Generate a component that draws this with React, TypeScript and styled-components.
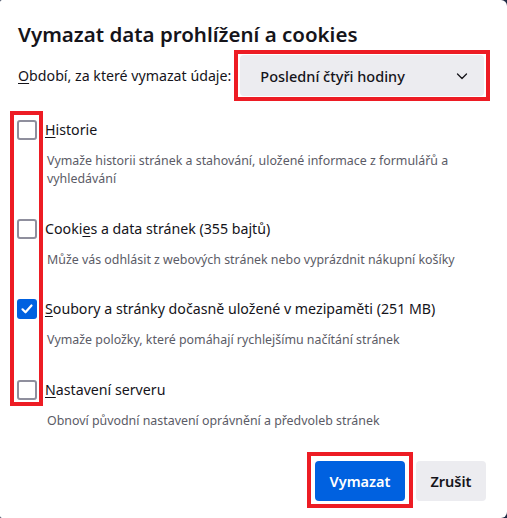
import React from "react";
import styled, { createGlobalStyle } from "styled-components";

const Global = createGlobalStyle`
  html, body { margin: 0; padding: 0; background: #1f2a44; }
  body { font-family: "Noto Sans", "Open Sans", sans-serif; color: #15141a; }
  * { box-sizing: border-box; }
`;

const Dialog = styled.div`
  width: 507px;
  height: 518px;
  background: #ffffff;
  border-radius: 2px 6px 6px 2px;
  padding: 20px 21px 0 17px;
  display: flex;
  flex-direction: column;
`;

const Title = styled.h1`
  margin: 0 0 0 1px;
  font-size: 20.5px;
  line-height: 28px;
  font-weight: 600;
  color: #15141a;
`;

const RangeRow = styled.div`
  margin-top: 7px;
  display: flex;
  align-items: center;
  gap: 9px;
  padding-left: 1px;
`;

const RangeLabel = styled.label`
  font-size: 14.2px;
  color: #15141a;
  white-space: nowrap;
`;

const Marked = styled.div`
  position: relative;
  &::after {
    content: "";
    position: absolute;
    border: 4px solid #ed1c24;
    pointer-events: none;
  }
`;

const Select = styled(Marked)`
  flex: 1;
  height: 41px;
  margin-right: 2px;
  background: #ececf0;
  border-radius: 4px;
  display: flex;
  align-items: center;
  justify-content: space-between;
  padding: 0 16px 0 20px;
  font-size: 14.5px;
  font-weight: 500;
  color: #15141a;
  &::after {
    left: -6px;
    right: -6px;
    top: -5px;
    bottom: -5px;
  }
`;

const List = styled.div`
  position: relative;
  margin-top: 24px;
  display: flex;
  flex-direction: column;
  gap: 30.7px;
`;

const Annotation = styled.div`
  position: absolute;
  left: -7px;
  top: -9px;
  width: 33px;
  height: 295px;
  border: 4px solid #ed1c24;
  pointer-events: none;
`;

const Item = styled.div`
  display: grid;
  grid-template-columns: 20px 1fr;
  column-gap: 8px;
  row-gap: 12px;
`;

const Box = styled.span<{ $checked?: boolean }>`
  width: 20px;
  height: 20px;
  border-radius: 3px;
  border: ${(p) => (p.$checked ? "none" : "2px solid #8f8f9d")};
  background: ${(p) => (p.$checked ? "#0061e0" : "#fff")};
  display: flex;
  align-items: center;
  justify-content: center;
`;

const ItemLabel = styled.span`
  font-size: 14.2px;
  line-height: 20px;
  color: #15141a;
`;

const Desc = styled.p`
  grid-column: 2;
  margin: 0 0 0 2px;
  font-size: 12.4px;
  line-height: 18px;
  color: #5b5b66;
`;

const Buttons = styled.div`
  margin-top: 31px;
  display: flex;
  justify-content: flex-end;
  gap: 11px;
`;

const ButtonWrap = styled(Marked)`
  display: flex;
  &::after {
    left: -8px;
    right: -8px;
    top: -9px;
    bottom: -7px;
  }
`;

const Button = styled.button<{ $primary?: boolean }>`
  height: 40px;
  border: none;
  border-radius: 4px;
  padding: 0;
  width: ${(p) => (p.$primary ? "90px" : "70px")};
  font-family: inherit;
  font-size: 14.5px;
  font-weight: 600;
  background: ${(p) => (p.$primary ? "#0061e0" : "#ececf0")};
  color: ${(p) => (p.$primary ? "#fff" : "#15141a")};
`;

const U = styled.u`
  text-underline-offset: 2px;
`;

const Chevron = () => (
  <svg width="12" height="12" viewBox="0 0 12 12" fill="none">
    <path d="M1.5 4l4.5 4.5L10.5 4" stroke="#15141a" strokeWidth="1.3" strokeLinecap="round" strokeLinejoin="round" />
  </svg>
);

const Check = () => (
  <svg width="14" height="14" viewBox="0 0 14 14" fill="none">
    <path d="M2.5 7.3l3 3L11.5 3.5" stroke="#fff" strokeWidth="2.2" strokeLinecap="round" strokeLinejoin="round" />
  </svg>
);

const items = [
  {
    label: <><U>H</U>istorie</>,
    desc: "Vymaže historii stránek a stahování, uložené informace z formulářů a vyhledávání",
    checked: false,
  },
  {
    label: <>Cooki<U>e</U>s a data stránek (355 bajtů)</>,
    desc: "Může vás odhlásit z webových stránek nebo vyprázdnit nákupní košíky",
    checked: false,
  },
  {
    label: <><U>S</U>oubory a stránky dočasně uložené v mezipaměti (251 MB)</>,
    desc: "Vymaže položky, které pomáhají rychlejšímu načítání stránek",
    checked: true,
  },
  {
    label: <><U>N</U>astavení serveru</>,
    desc: "Obnoví původní nastavení oprávnění a předvoleb stránek",
    checked: false,
  },
];

export default function App() {
  return (
    <>
      <Global />
      <Dialog>
        <Title>Vymazat data prohlížení a cookies</Title>
        <RangeRow>
          <RangeLabel><U>O</U>bdobí, za které vymazat údaje:</RangeLabel>
          <Select>
            <span>Poslední čtyři hodiny</span>
            <Chevron />
          </Select>
        </RangeRow>
        <List>
          <Annotation />
          {items.map((it, i) => (
            <Item key={i}>
              <Box $checked={it.checked}>{it.checked && <Check />}</Box>
              <ItemLabel>{it.label}</ItemLabel>
              <Desc>{it.desc}</Desc>
            </Item>
          ))}
        </List>
        <Buttons>
          <ButtonWrap>
            <Button $primary>Vymazat</Button>
          </ButtonWrap>
          <Button>Zrušit</Button>
        </Buttons>
      </Dialog>
    </>
  );
}
